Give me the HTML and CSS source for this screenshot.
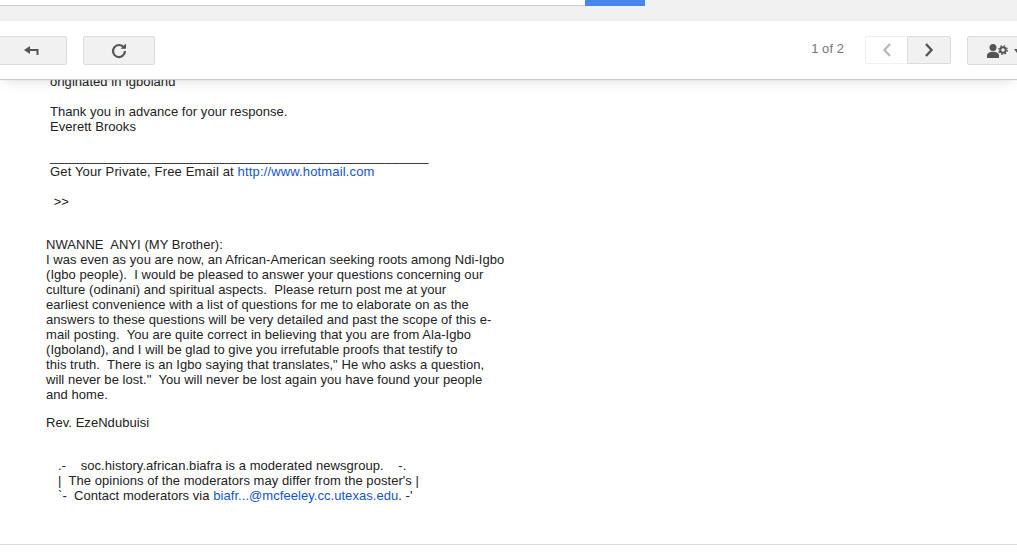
FILE: index.html
```html
<!DOCTYPE html>
<html lang="en">
<head>
    <meta charset="UTF-8">
    <title>soc.history.african.biafra</title>
    <link rel="stylesheet" href="styles.css">
</head>
<body>
    <div class="top-strip">
        <div class="top-line"></div>
        <div class="top-blue"></div>
        <div class="top-rest"></div>
    </div>
    <div class="gray-band"></div>

    <div class="toolbar">
        <button type="button" class="btn btn-back" title="Back">
            <svg width="15" height="9" viewBox="0 0 15 9"><path d="M0 4 L6 0 V3 H14.500 V9 H12.500 V5 H6 V8 Z" fill="#555"/></svg>
        </button>
        <button type="button" class="btn btn-refresh" title="Refresh">
            <svg width="16" height="16" viewBox="0 0 16 16"><path d="M13 4.700 A6 6 0 1 0 14 8" fill="none" stroke="#555" stroke-width="2.200"/><path d="M9.500 5.800 H15 V0.500 Z" fill="#555"/></svg>
        </button>
        <div class="spacer"></div>
        <span class="count">1 of 2</span>
        <div class="pager">
            <button type="button" class="btn-page prev" title="Newer">
                <svg width="10" height="14" viewBox="0 0 10 14"><path d="M8 1 L2.500 7 L8 13" fill="none" stroke="#bbb" stroke-width="2.400"/></svg>
            </button>
            <button type="button" class="btn-page next" title="Older">
                <svg width="10" height="14" viewBox="0 0 10 14"><path d="M2 1 L7.500 7 L2 13" fill="none" stroke="#555" stroke-width="2.400"/></svg>
            </button>
        </div>
        <button type="button" class="btn btn-people" title="Manage">
            <svg width="21" height="14" viewBox="0 0 21 14">
                <circle cx="6" cy="3.500" r="3.500" fill="#555"/>
                <path d="M0 14 V11.500 C0 9 3 7.800 6 7.800 C9 7.800 12 9 12 11.500 V14 Z" fill="#555"/>
                <circle cx="16" cy="6" r="2.800" fill="none" stroke="#555" stroke-width="2"/>
                <circle cx="16" cy="6" r="4.300" fill="none" stroke="#555" stroke-width="1.200" stroke-dasharray="1.700 1.700"/>
            </svg>
            <span class="caret"></span>
        </button>
    </div>

    <div class="message">
        <div class="quoted">
            <p>originated in Igboland</p>
            <p class="blank">&nbsp;</p>
            <p>Thank you in advance for your response.</p>
            <p>Everett Brooks</p>
            <p class="blank">&nbsp;</p>
            <p>____________________________________________________</p>
            <p class="wide">Get Your Private, Free Email at <a href="#">http://www.hotmail.com</a></p>
            <p class="blank">&nbsp;</p>
            <p>&nbsp;&gt;&gt;</p>
        </div>
        <div class="reply">
            <p>NWANNE&nbsp; ANYI (MY Brother):</p>
            <p>I was even as you are now, an African-American seeking roots among Ndi-Igbo</p>
            <p>(Igbo people).&nbsp; I would be pleased to answer your questions concerning our</p>
            <p>culture (odinani) and spiritual aspects.&nbsp; Please return post me at your</p>
            <p>earliest convenience with a list of questions for me to elaborate on as the</p>
            <p>answers to these questions will be very detailed and past the scope of this e-</p>
            <p>mail posting.&nbsp; You are quite correct in believing that you are from Ala-Igbo</p>
            <p>(Igboland), and I will be glad to give you irrefutable proofs that testify to</p>
            <p>this truth.&nbsp; There is an Igbo saying that translates," He who asks a question,</p>
            <p>will never be lost."&nbsp; You will never be lost again you have found your people</p>
            <p>and home.</p>
        </div>
        <p class="signature">Rev. EzeNdubuisi</p>
        <div class="footer-box">
            <p>.-&nbsp;&nbsp;&nbsp; soc.history.african.biafra is a moderated newsgroup.&nbsp;&nbsp;&nbsp; -.</p>
            <p>|&nbsp; The opinions of the moderators may differ from the poster's |</p>
            <p>`-&nbsp; Contact moderators via <a href="#">biafr...@mcfeeley.cc.utexas.edu</a>. -'</p>
        </div>
    </div>
    <div class="bottom-rule"></div>
</body>
</html>
```

FILE: styles.css
```css
html, body {
    margin: 0;
    padding: 0;
}

body {
    width: 1017px;
    height: 560px;
    overflow: hidden;
    background: #fff;
    font-family: "Liberation Sans", Arial, sans-serif;
    font-size: 13px;
    letter-spacing: 0.05px;
    color: #222;
}

p {
    margin: 0;
}

a {
    color: #15c;
    text-decoration: none;
}

/* top of the page, mostly cut off */
.top-strip {
    display: flex;
    height: 6px;
    background: #f1f1f1;
}

.top-line {
    width: 585px;
    height: 5px;
    background: #fff;
    border-bottom: 1px solid #ccc;
    box-sizing: content-box;
}

.top-blue {
    width: 60px;
    background: #4787ed;
}

.top-rest {
    flex: 1;
}

.gray-band {
    height: 15px;
    background: #f1f1f1;
}

/* toolbar */
.toolbar {
    display: flex;
    align-items: flex-start;
    position: relative;
    z-index: 2;
    height: 58px;
    box-sizing: border-box;
    padding: 15px 0 0 0;
    background: #fff;
    box-shadow: 0 1px 1px #ccc, 0 6px 14px -6px rgba(0, 0, 0, 0.18);
}

.btn {
    display: flex;
    align-items: center;
    justify-content: center;
    height: 29px;
    padding: 0;
    background: #f1f1f1;
    border: 1px solid #dcdcdc;
    border-radius: 2px;
    box-sizing: border-box;
}

.btn-back {
    width: 72px;
    margin-left: -5px;
}

.btn-refresh {
    width: 72px;
    margin-left: 16px;
}

.spacer {
    flex: 1;
}

.count {
    margin-top: 5px;
    margin-right: 1px;
    color: #777;
    font-size: 13px;
    line-height: 15px;
}

.pager {
    display: flex;
    margin-left: 20px;
}

.btn-page {
    display: flex;
    align-items: center;
    justify-content: center;
    height: 28px;
    padding: 0;
    box-sizing: border-box;
}

.prev {
    width: 42px;
    background: #fff;
    border: 1px solid #f1f1f1;
    border-right: none;
    border-radius: 2px 0 0 2px;
}

.next {
    width: 44px;
    background: #f1f1f1;
    border: 1px solid #dcdcdc;
    border-radius: 0 2px 2px 0;
}

.btn-people {
    flex: none;
    width: 60px;
    margin-left: 16px;
    margin-right: -10px;
    justify-content: flex-start;
    padding-left: 19px;
}

.caret {
    margin-left: 6px;
    border-top: 4px solid #555;
    border-left: 3px solid transparent;
    border-right: 3px solid transparent;
}

/* message text */
.message {
    position: relative;
    z-index: 1;
    height: 465px;
    margin-top: -5px;
    padding-left: 46px;
    box-sizing: border-box;
    line-height: 15px;
}

.quoted {
    padding-left: 4px;
}

.wide {
    letter-spacing: 0.15px;
}

.reply {
    margin-top: 28px;
}

.signature {
    margin-top: 13px;
}

.footer-box {
    margin-top: 28px;
    padding-left: 12px;
}

.bottom-rule {
    position: absolute;
    top: 544px;
    left: 0;
    width: 1017px;
    height: 1px;
    background: #ddd;
}
```
